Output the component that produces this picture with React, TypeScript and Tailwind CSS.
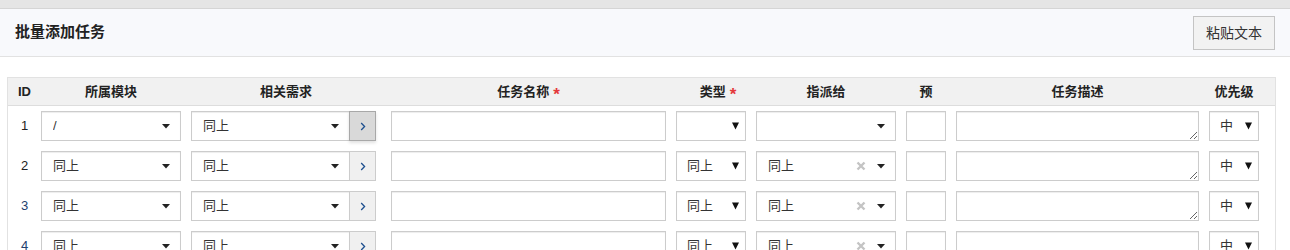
import React from 'react';

const font = "font-['Liberation_Sans','Noto_Sans_CJK_SC',sans-serif]";

const Caret: React.FC = () => (
  <svg width="8" height="5" viewBox="0 0 8 5" className="shrink-0">
    <polygon points="0,0 8,0 4,4.5" fill="#222" />
  </svg>
);

const BigCaret: React.FC = () => (
  <svg width="7" height="8" viewBox="0 0 7 8" className="shrink-0">
    <polygon points="0,0.5 7,0.5 3.5,7.5" fill="#111" />
  </svg>
);

const boxCls =
  'h-[30px] border border-[#cccccc] bg-white shadow-[inset_0_1px_1px_rgba(0,0,0,0.075)]';

const ChosenSelect: React.FC<{ value: string; width: string; clear?: boolean }> = ({ value, width, clear }) => (
  <div className={`${boxCls} ${width} flex items-center pl-[11px] pr-[10px]`}>
    <span className="flex-1 truncate">{value}</span>
    {clear && (
      <svg width="10" height="10" viewBox="0 0 10 10" className="mr-[11px] shrink-0">
        <path d="M1.5 1.5 L8.5 8.5 M8.5 1.5 L1.5 8.5" stroke="#c4c4c4" strokeWidth="2.4" />
      </svg>
    )}
    <Caret />
  </div>
);

const NativeSelect: React.FC<{ value: string; width: string }> = ({ value, width }) => (
  <div className={`${boxCls} ${width} flex items-center pl-[10px] pr-[6px]`}>
    <span className="flex-1">{value}</span>
    <BigCaret />
  </div>
);

const rows = [
  { id: '1', module: '/', story: '同上', type: '', assign: '', idColor: 'text-[#222]', active: true },
  { id: '2', module: '同上', story: '同上', type: '同上', assign: '同上', idColor: 'text-[#222]', active: false },
  { id: '3', module: '同上', story: '同上', type: '同上', assign: '同上', idColor: 'text-[#23406e]', active: false },
  { id: '4', module: '同上', story: '同上', type: '同上', assign: '同上', idColor: 'text-[#23406e]', active: false },
];

const Star = () => (
  <span className="inline-block ml-[4px] translate-y-[4px] text-[17px] leading-none text-[#e4393c]">*</span>
);

export default function App() {
  return (
    <div className={`${font} min-h-[250px] bg-white text-[13px] text-[#333] overflow-hidden`}>
      <div className="h-[9px] bg-[#e5e5e5] border-b border-[#d5d5d5]" />
      <div className="h-[48px] bg-[#f8f9fc] border-b border-[#e2e2e2] flex items-center justify-between pl-[15px] pr-[15px]">
        <h2 className="text-[15px] font-bold text-[#222]">批量添加任务</h2>
        <button className="mt-[1px] h-[34px] w-[82px] border border-[#c4c4c4] bg-[#f2f2f2] text-[14px] text-[#333]">
          粘贴文本
        </button>
      </div>

      <div className="mt-[20px] ml-[7px] w-[1269px] border-x border-t border-[#e2e2e2]">
        <div className="h-[28px] bg-[#f1f1f1] border-b border-[#dddddd] flex items-center font-bold text-[#222]">
          <div className="w-[33px] text-center">ID</div>
          <div className="flex gap-[10px]">
            <div className="w-[140px] text-center">所属模块</div>
            <div className="w-[190px] text-center">相关需求</div>
            <div className="w-[275px] text-center">任务名称<Star /></div>
            <div className="w-[70px] text-center pl-[14px]">类型<Star /></div>
            <div className="w-[140px] text-center">指派给</div>
            <div className="w-[40px] text-center">预</div>
            <div className="w-[243px] text-center">任务描述</div>
            <div className="w-[50px] text-center">优先级</div>
          </div>
        </div>

        <div className="pt-[5px] flex flex-col gap-[10px] pb-[10px]">
          {rows.map((r) => (
            <div key={r.id} className="flex items-center h-[30px]">
              <div className={`w-[33px] text-center ${r.idColor}`}>{r.id}</div>
              <div className="flex gap-[10px]">
                <ChosenSelect value={r.module} width="w-[140px]" />
                <div className="w-[190px] flex">
                  <ChosenSelect value={r.story} width="w-[159px]" />
                  <button
                    className={`h-[30px] w-[27px] -ml-px flex items-center justify-center border ${
                      r.active
                        ? 'bg-[#d9d9d9] border-[#a8a8a8] shadow-[0_2px_3px_rgba(0,0,0,0.12)]'
                        : 'bg-[#f0f0f0] border-[#cccccc]'
                    }`}
                  >
                    <svg width="6" height="9" viewBox="0 0 6 9">
                      <path d="M1.2 1 L4.6 4.5 L1.2 8" fill="none" stroke="#1d4f8f" strokeWidth="1.3" />
                    </svg>
                  </button>
                </div>
                <input className={`${boxCls} w-[275px] outline-none`} />
                <NativeSelect value={r.type} width="w-[70px]" />
                <ChosenSelect value={r.assign} width="w-[140px]" clear={r.assign !== ''} />
                <input className={`${boxCls} w-[40px] outline-none`} />
                <textarea className={`${boxCls} w-[243px] outline-none resize-y block`} />
                <NativeSelect value="中" width="w-[50px]" />
              </div>
            </div>
          ))}
        </div>
      </div>
    </div>
  );
}
